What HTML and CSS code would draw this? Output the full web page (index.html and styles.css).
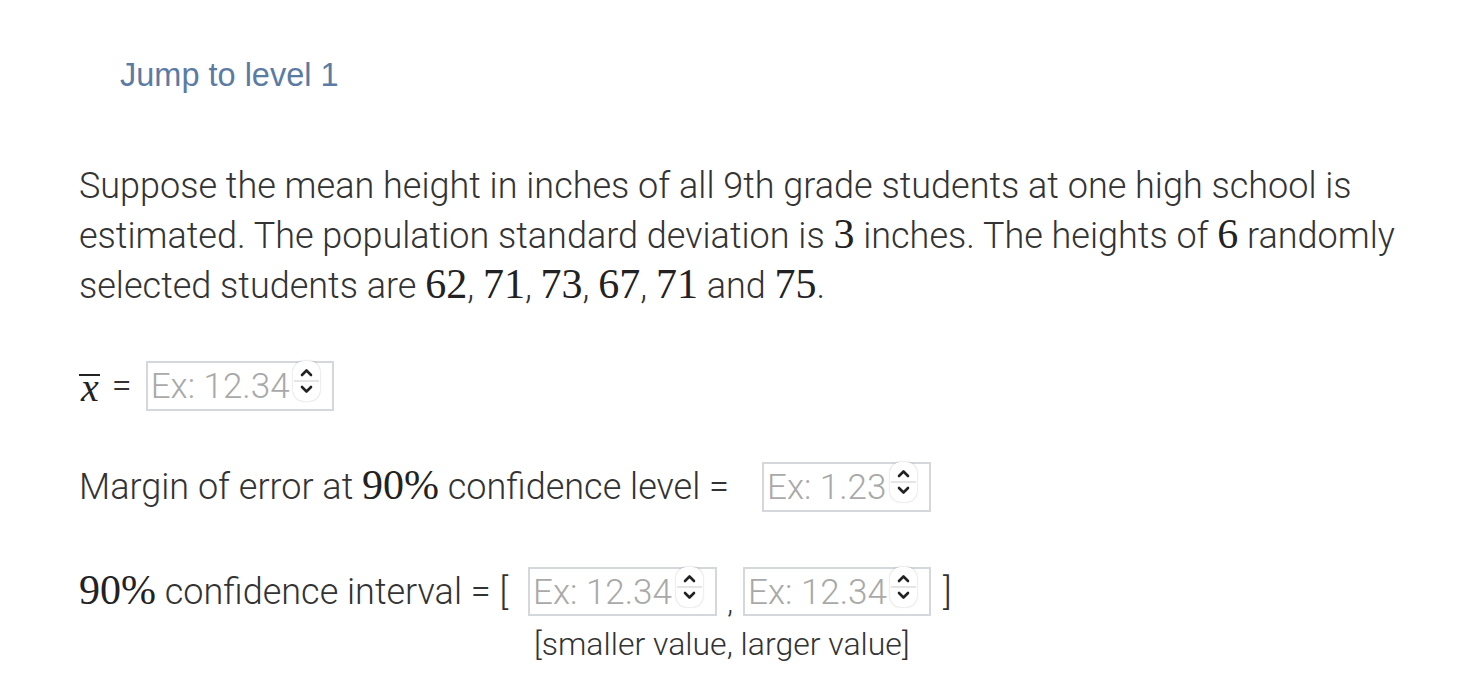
FILE: index.html
```html
<!DOCTYPE html>
<html>
<head>
<meta charset="utf-8">
<link rel="stylesheet" href="styles.css">
</head>
<body>
<div class="page">
  <a class="jump" href="#">Jump to level 1</a>
  <p class="question">Suppose the mean height in inches of all 9th grade students at one high school is estimated. The population standard deviation is <span class="m">3</span> inches. The heights of <span class="m">6</span> randomly selected students are <span class="m">62</span>, <span class="m">71</span>, <span class="m">73</span>, <span class="m">67</span>, <span class="m">71</span> and <span class="m">75</span>.</p>

  <div class="row row-mean">
    <span class="xbar">x</span><span class="eq">=</span>
    <span class="field w186"><input type="text" placeholder="Ex: 12.34"><span class="spin"><svg viewBox="0 0 27 40" width="27" height="40"><path d="M9 14 L13.5 9.5 L18 14" /><line class="div" x1="1" y1="20" x2="26" y2="20"/><path d="M9 26 L13.5 30.5 L18 26" /></svg></span></span>
  </div>

  <div class="row row-moe">
    <span>Margin of error at <span class="m">90%</span> confidence level =</span>
    <span class="field w168"><input type="text" placeholder="Ex: 1.23"><span class="spin"><svg viewBox="0 0 27 40" width="27" height="40"><path d="M9 14 L13.5 9.5 L18 14" /><line class="div" x1="1" y1="20" x2="26" y2="20"/><path d="M9 26 L13.5 30.5 L18 26" /></svg></span></span>
  </div>

  <div class="row row-ci">
    <span class="ci-label"><span class="m">90%</span> confidence interval = [</span>
    <div class="ci-box">
      <div class="ci-inputs">
        <span class="field w188"><input type="text" placeholder="Ex: 12.34"><span class="spin"><svg viewBox="0 0 27 40" width="27" height="40"><path d="M9 14 L13.5 9.5 L18 14" /><line class="div" x1="1" y1="20" x2="26" y2="20"/><path d="M9 26 L13.5 30.5 L18 26" /></svg></span></span>
        <span class="comma">,</span>
        <span class="field w187"><input type="text" placeholder="Ex: 12.34"><span class="spin"><svg viewBox="0 0 27 40" width="27" height="40"><path d="M9 14 L13.5 9.5 L18 14" /><line class="div" x1="1" y1="20" x2="26" y2="20"/><path d="M9 26 L13.5 30.5 L18 26" /></svg></span></span>
        <span class="close">]</span>
      </div>
      <div class="hint">[smaller value, larger value]</div>
    </div>
  </div>
</div>
</body>
</html>
```

FILE: styles.css
```css
html, body {
  margin: 0;
  padding: 0;
  background: #fff;
}
.page {
  padding: 54px 0 0 79px;
  width: 1330px;
  font-family: Roboto, "Liberation Sans", sans-serif;
  font-weight: 300;
  color: #333;
  font-size: 36px;
}
.jump {
  display: block;
  margin-left: 41px;
  font-family: "Liberation Sans", Arial, sans-serif;
  font-weight: 400;
  font-size: 32.5px;
  line-height: 42px;
  color: #5b7ba3;
  text-decoration: none;
}
.question {
  margin: 65px 0 0 0;
  line-height: 50px;
}
.m {
  font-family: "Liberation Serif", "DejaVu Serif", serif;
  font-weight: 400;
  font-size: 42px;
  line-height: 36px;
  color: #222;
}
.row {
  display: flex;
  align-items: center;
}
.row-mean {
  margin-top: 50px;
  height: 50px;
}
.xbar {
  display: inline-block;
  font-family: "Liberation Serif", serif;
  font-style: italic;
  font-size: 40px;
  line-height: 24px;
  color: #222;
  border-top: 2.5px solid #222;
  padding: 0 1px 0 2px;
  margin-top: 2px;
}
.eq {
  margin-left: 12px;
  margin-right: 14px;
}
.field {
  display: inline-flex;
  align-items: flex-start;
  box-sizing: border-box;
  height: 50px;
  border: 2px solid #d4d8dc;
  background: #fff;
  position: relative;
}
.field input {
  border: none;
  outline: none;
  padding: 0 0 0 3px;
  margin: 0;
  height: 46px;
  width: 100%;
  font-family: Roboto, sans-serif;
  font-weight: 300;
  font-size: 35px;
  color: #333;
  background: transparent;
}
.field input::placeholder {
  color: #a9a9a9;
}
.spin {
  position: absolute;
  right: 12px;
  top: -2px;
  width: 27px;
  height: 40px;
  border-radius: 11px;
  background: #fff;
  box-shadow: 0 0 2px rgba(0,0,0,0.25);
}
.spin svg {
  display: block;
}
.spin path {
  fill: none;
  stroke: #222;
  stroke-width: 2.6;
  stroke-linecap: round;
  stroke-linejoin: round;
}
.spin .div {
  stroke: #ddd;
  stroke-width: 1.5;
}
.w186 { width: 188px; }
.w168 { width: 169px; margin-left: 33px; }
.w188 { width: 189px; }
.w187 { width: 188px; }
.row-moe {
  margin-top: 50px;
  height: 52px;
}
.row-ci {
  margin-top: 54px;
  align-items: flex-start;
}
.ci-label {
  line-height: 50px;
}
.ci-box {
  margin-left: 20px;
  display: flex;
  flex-direction: column;
}
.ci-inputs {
  display: flex;
  align-items: flex-start;
  height: 50px;
}
.ci-inputs .field {
  height: 49px;
}
.comma {
  width: 26px;
  text-align: center;
  line-height: 56px;
  margin-top: 8px;
  font-size: 30px;
}
.close {
  margin-left: 12px;
  line-height: 50px;
}
.hint {
  margin-top: 2px;
  margin-left: 6px;
  font-size: 32px;
  line-height: 50px;
}
```
